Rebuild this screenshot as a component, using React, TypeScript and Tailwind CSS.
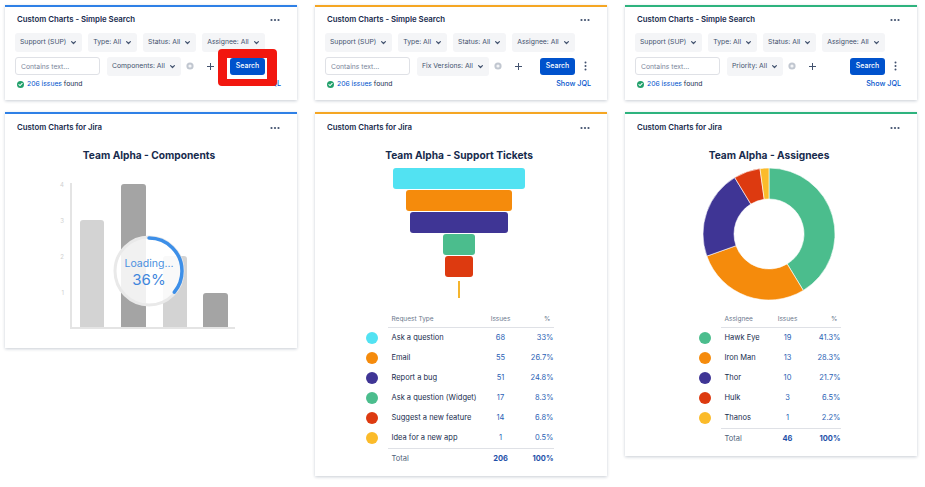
import React from 'react';

type Row = { label: string; color: string; issues: number; pct: string };

const tickets: Row[] = [
  { label: 'Ask a question', color: '#52e2f2', issues: 68, pct: '33%' },
  { label: 'Email', color: '#f58b0c', issues: 55, pct: '26.7%' },
  { label: 'Report a bug', color: '#3f3595', issues: 51, pct: '24.8%' },
  { label: 'Ask a question (Widget)', color: '#4bbd8d', issues: 17, pct: '8.3%' },
  { label: 'Suggest a new feature', color: '#dd3a10', issues: 14, pct: '6.8%' },
  { label: 'Idea for a new app', color: '#fbbb2a', issues: 1, pct: '0.5%' },
];

const assignees: Row[] = [
  { label: 'Hawk Eye', color: '#4bbd8d', issues: 19, pct: '41.3%' },
  { label: 'Iron Man', color: '#f58b0c', issues: 13, pct: '28.3%' },
  { label: 'Thor', color: '#3f3595', issues: 10, pct: '21.7%' },
  { label: 'Hulk', color: '#dd3a10', issues: 3, pct: '6.5%' },
  { label: 'Thanos', color: '#fbbb2a', issues: 1, pct: '2.2%' },
];

function Chevron() {
  return (
    <svg width="7" height="7" viewBox="0 0 7 7" fill="none" className="shrink-0">
      <path d="M1.6 2.6 3.5 4.5 5.4 2.6" stroke="#42526e" strokeWidth="1.2" strokeLinecap="round" strokeLinejoin="round" />
    </svg>
  );
}

function Dots() {
  return (
    <svg width="10" height="4" viewBox="0 0 10 4">
      <circle cx="1.5" cy="2" r="1.1" fill="#42526e" />
      <circle cx="5" cy="2" r="1.1" fill="#42526e" />
      <circle cx="8.5" cy="2" r="1.1" fill="#42526e" />
    </svg>
  );
}

function Pill({ label }: { label: string }) {
  return (
    <div className="flex h-[19px] shrink-0 items-center gap-[4px] whitespace-nowrap rounded-[3px] bg-[#f4f5f7] px-[5px] text-[6.8px] text-[#42526e]">
      {label}
      <Chevron />
    </div>
  );
}

function SearchPanel({
  border,
  extra,
  highlight,
}: {
  border: string;
  extra: string;
  highlight?: boolean;
}) {
  return (
    <div className={`relative h-[95px] border-t-2 bg-white pb-[10px] pl-[12px] pr-[16px] pt-[6px] shadow-[0_1px_3px_rgba(9,30,66,0.22)] ${border}`}>
      <div className="flex h-[14px] items-center justify-between">
        <span className="whitespace-nowrap text-[7.8px] font-semibold text-[#172b4d]">Custom Charts - Simple Search</span>
        <span className="flex w-[12px] justify-center">
          <Dots />
        </span>
      </div>
      <div className="-ml-[2px] mt-[6px] flex h-[19px] items-center gap-[6px]">
        <Pill label="Support (SUP)" />
        <Pill label="Type: All" />
        <Pill label="Status: All" />
        <Pill label="Assignee: All" />
      </div>
      <div className="-ml-[2px] mt-[5px] flex h-[18px] items-center">
        <input
          readOnly
          placeholder="Contains text..."
          className="h-[18px] w-[85px] shrink-0 rounded-[3px] border border-[#dfe1e6] bg-white px-[5px] text-[6.8px] outline-none placeholder:text-[#7a869a]"
        />
        <div className="ml-[7px]">
          <Pill label={extra} />
        </div>
        <svg className="ml-[5px] shrink-0" width="8" height="8" viewBox="0 0 8 8">
          <circle cx="4" cy="4" r="3.6" fill="#c1c7d0" />
          <circle cx="4" cy="4" r="1.6" fill="#f4f5f7" />
        </svg>
        <svg className="ml-[12px] shrink-0" width="9" height="9" viewBox="0 0 9 9">
          <path d="M4.5 1v7M1 4.5h7" stroke="#42526e" strokeWidth="1" />
        </svg>
        <div className="flex-1" />
        <button className="flex h-[17px] w-[35px] shrink-0 items-center justify-center rounded-[3px] bg-[#0052cc] text-[7px] font-medium text-white">
          Search
        </button>
        <span className="ml-[4px] flex w-[12px] justify-center">
          <svg width="3" height="10" viewBox="0 0 3 10">
            <circle cx="1.5" cy="1.5" r="1" fill="#42526e" />
            <circle cx="1.5" cy="5" r="1" fill="#42526e" />
            <circle cx="1.5" cy="8.5" r="1" fill="#42526e" />
          </svg>
        </span>
      </div>
      <div className="mt-[3px] flex h-[12px] items-center justify-between text-[6.8px]">
        <div className="flex items-center gap-[3px]">
          <svg width="7" height="7" viewBox="0 0 8 8">
            <circle cx="4" cy="4" r="4" fill="#22a06b" />
            <path d="M2.2 4.1 3.5 5.3 5.9 2.8" stroke="#fff" strokeWidth="1.2" fill="none" strokeLinecap="round" />
          </svg>
          <span>
            <span className="text-[#0052cc]">206 issues</span>
            <span className="text-[#172b4d]"> found</span>
          </span>
        </div>
        <span className="text-[7.2px] font-medium text-[#0052cc]">Show JQL</span>
      </div>
      {highlight && (
        <div className="absolute left-[213px] top-[42px] h-[37px] w-[59px] rounded-[4px] border-b-[7px] border-l-[9px] border-r-[10px] border-t-[9px] border-[#f2170f]" />
      )}
    </div>
  );
}

function ChartPanel({ border, title, children }: { border: string; title: string; children: React.ReactNode }) {
  return (
    <div className={`border-t-2 bg-white pb-[8px] pl-[12px] pr-[16px] pt-[6px] shadow-[0_1px_3px_rgba(9,30,66,0.22)] ${border}`}>
      <div className="flex h-[16px] items-center justify-between">
        <span className="text-[7.8px] font-semibold text-[#172b4d]">Custom Charts for Jira</span>
        <span className="flex w-[12px] justify-center">
          <Dots />
        </span>
      </div>
      <div className="mt-[12px] h-[14px] text-center text-[10.2px] font-bold leading-[14px] text-[#172b4d]">{title}</div>
      <div className="mt-[6px]">{children}</div>
    </div>
  );
}

function BarChart() {
  const bars = [
    { x: 63, w: 24, y: 52, c: '#d3d3d3' },
    { x: 104, w: 25, y: 16, c: '#a4a4a4' },
    { x: 146, w: 24, y: 88, c: '#d3d3d3' },
    { x: 186, w: 25, y: 125, c: '#a4a4a4' },
  ];
  const circ = 2 * Math.PI * 33;
  return (
    <svg width="264" height="172" viewBox="0 0 264 172">
      {[4, 3, 2, 1].map((n, i) => (
        <text key={n} x="47" y={19 + i * 36} fontSize="6" fill="#d0d0d0" textAnchor="end" fontFamily="Inter, sans-serif">
          {n}
        </text>
      ))}
      {bars.map((b, i) => (
        <path
          key={i}
          d={`M${b.x} 160 V${b.y + 3} Q${b.x} ${b.y} ${b.x + 3} ${b.y} H${b.x + b.w - 3} Q${b.x + b.w} ${b.y} ${b.x + b.w} ${b.y + 3} V160 Z`}
          fill={b.c}
        />
      ))}
      <path d="M54 15 V160 H218" stroke="#e4e4e4" strokeWidth="2" fill="none" />
      <circle cx="132" cy="103" r="34" fill="#ffffff" fillOpacity="0.85" stroke="#e9e9e9" strokeWidth="3" />
      <circle
        cx="132"
        cy="103"
        r="33"
        fill="none"
        stroke="#3d8fe8"
        strokeWidth="3.5"
        strokeLinecap="round"
        strokeDasharray={`${circ * 0.36} ${circ}`}
        transform="rotate(-90 132 103)"
      />
      <text x="132" y="99" fontSize="10.5" fill="#4a8fe0" textAnchor="middle" fontFamily="Inter, sans-serif">
        Loading...
      </text>
      <text x="132" y="117" fontSize="15" fill="#3f86dc" textAnchor="middle" fontFamily="Inter, sans-serif">
        36%
      </text>
    </svg>
  );
}

function Funnel() {
  return (
    <div className="flex flex-col items-center gap-[1px]">
      {tickets.slice(0, 5).map((t) => (
        <div key={t.label} className="h-[21px] rounded-[3px]" style={{ width: t.issues * 1.94, background: t.color }} />
      ))}
      <div className="mt-[3px] h-[17px] w-[2px] bg-[#f5b52e]" />
    </div>
  );
}

function Donut() {
  const total = assignees.reduce((s, a) => s + a.issues, 0);
  const R = 66;
  const r = 35;
  let acc = 0;
  const pt = (rad: number, f: number) => {
    const a = f * 2 * Math.PI - Math.PI / 2;
    return `${66 + rad * Math.cos(a)} ${66 + rad * Math.sin(a)}`;
  };
  return (
    <svg width="132" height="132" viewBox="0 0 132 132" className="mx-auto">
      {assignees.map((a) => {
        const f0 = acc / total;
        acc += a.issues;
        const f1 = acc / total;
        const large = f1 - f0 > 0.5 ? 1 : 0;
        const d = `M${pt(R, f0)} A${R} ${R} 0 ${large} 1 ${pt(R, f1)} L${pt(r, f1)} A${r} ${r} 0 ${large} 0 ${pt(r, f0)} Z`;
        return <path key={a.label} d={d} fill={a.color} stroke="#fff" strokeWidth="0.6" />;
      })}
    </svg>
  );
}

function DataTable({ head, rows, total, nameW }: { head: string; rows: Row[]; total: number; nameW: string }) {
  return (
    <div className="flex justify-center">
      <div>
        <div className="flex h-[16px]">
          <div className="w-[23px]" />
          <div className="flex items-center border-b border-[#dfe1e6] text-[6.5px] text-[#6b778c]">
            <div className={`${nameW} pl-[4px]`}>{head}</div>
            <div className="w-[40px] text-center">Issues</div>
            <div className="w-[33px] pr-[3px] text-right">%</div>
          </div>
        </div>
        {rows.map((r) => (
          <div key={r.label} className="flex h-[20px] items-center text-[7.5px]">
            <div className="w-[23px] pl-[1px]">
              <div className="h-[12px] w-[12px] rounded-full" style={{ background: r.color }} />
            </div>
            <div className={`${nameW} pl-[4px] text-[#172b4d]`}>{r.label}</div>
            <div className="w-[40px] text-center text-[#2a5fb5]">{r.issues}</div>
            <div className="w-[33px] text-right text-[#2a5fb5]">{r.pct}</div>
          </div>
        ))}
        <div className="flex h-[20px]">
          <div className="w-[23px]" />
          <div className="flex items-center border-t border-[#dfe1e6] text-[7.5px]">
            <div className={`${nameW} pl-[4px] text-[#505f79]`}>Total</div>
            <div className="w-[40px] text-center font-bold text-[#1d4fa8]">{total}</div>
            <div className="w-[33px] text-right font-bold text-[#1d4fa8]">100%</div>
          </div>
        </div>
      </div>
    </div>
  );
}

export default function App() {
  return (
    <div className="min-h-[487px] w-[925px] bg-white font-['Inter',sans-serif]">
      <div className="grid grid-cols-3 items-start gap-x-[18px] pl-[5px] pr-[8px] pt-[5px]">
        <div className="flex flex-col gap-[12px]">
          <SearchPanel border="border-[#2f80e6]" extra="Components: All" highlight />
          <ChartPanel border="border-[#2f80e6]" title="Team Alpha - Components">
            <BarChart />
          </ChartPanel>
        </div>
        <div className="flex flex-col gap-[12px]">
          <SearchPanel border="border-[#f5a623]" extra="Fix Versions: All" />
          <ChartPanel border="border-[#f5a623]" title="Team Alpha - Support Tickets">
            <Funnel />
            <div className="mt-[14px]">
              <DataTable head="Request Type" rows={tickets} total={206} nameW="w-[93px]" />
            </div>
          </ChartPanel>
        </div>
        <div className="flex flex-col gap-[12px]">
          <SearchPanel border="border-[#2eb37e]" extra="Priority: All" />
          <ChartPanel border="border-[#2eb37e]" title="Team Alpha - Assignees">
            <Donut />
            <div className="mt-[12px]">
              <DataTable head="Assignee" rows={assignees} total={46} nameW="w-[47px]" />
            </div>
          </ChartPanel>
        </div>
      </div>
    </div>
  );
}
